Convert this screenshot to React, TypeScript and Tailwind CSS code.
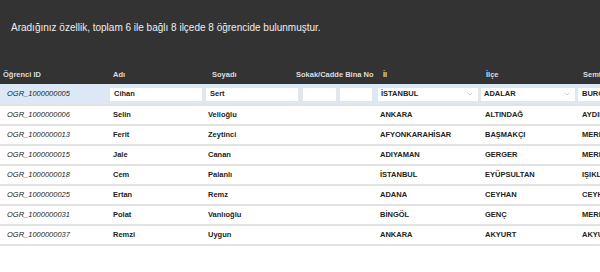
import React from 'react';
import { ChevronDown } from 'lucide-react';

const students = [
  { id: 'OGR_1000000005', ad: 'Cihan', soyad: 'Sert', il: 'İSTANBUL', ilce: 'ADALAR', semt: 'BURGAZADA' },
  { id: 'OGR_1000000006', ad: 'Selin', soyad: 'Velioğlu', il: 'ANKARA', ilce: 'ALTINDAĞ', semt: 'AYDINLIKEVLER' },
  { id: 'OGR_1000000013', ad: 'Ferit', soyad: 'Zeytinci', il: 'AFYONKARAHİSAR', ilce: 'BAŞMAKÇI', semt: 'MERKEZ' },
  { id: 'OGR_1000000015', ad: 'Jale', soyad: 'Canan', il: 'ADIYAMAN', ilce: 'GERGER', semt: 'MERKEZ' },
  { id: 'OGR_1000000018', ad: 'Cem', soyad: 'Palanlı', il: 'İSTANBUL', ilce: 'EYÜPSULTAN', semt: 'IŞIKLAR' },
  { id: 'OGR_1000000025', ad: 'Ertan', soyad: 'Remz', il: 'ADANA', ilce: 'CEYHAN', semt: 'CEYHAN' },
  { id: 'OGR_1000000031', ad: 'Polat', soyad: 'Vanlıoğlu', il: 'BİNGÖL', ilce: 'GENÇ', semt: 'MERKEZ' },
  { id: 'OGR_1000000037', ad: 'Remzi', soyad: 'Uygun', il: 'ANKARA', ilce: 'AKYURT', semt: 'AKYURT' },
];

const cols = 'grid grid-cols-[108px_95px_98px_37px_37px_105px_97px_100px]';

const TextBox = ({ value, className = '' }: { value?: string; className?: string }) => (
  <div className={`h-[15px] bg-white border border-[#e6e6e6] flex items-center pl-[4px] overflow-hidden whitespace-nowrap ${className}`}>
    {value}
  </div>
);

const SelectBox = ({ value, className = '' }: { value: string; className?: string }) => (
  <div className={`h-[15px] bg-white border border-[#e6e6e6] flex items-center justify-between pl-[3px] pr-[4px] ${className}`}>
    <span>{value}</span>
    <ChevronDown size={8} className="text-[#999]" strokeWidth={1.5} />
  </div>
);

const App = () => {
  return (
    <div className="w-[600px] h-[272px] bg-white overflow-hidden font-['Liberation_Sans',Arial,sans-serif]">
      <div className="bg-[#333333]">
        <div className="h-[66px] pl-[11px] pt-[20px] text-[10px] text-[#eeeeee]">
          Aradığınız özellik, toplam 6 ile bağlı 8 ilçede 8 öğrencide bulunmuştur.
        </div>
        <div className={`${cols} h-[18px] items-center text-[7.5px] font-bold text-[#dddddd]`}>
          <div className="pl-[3px]">Öğrenci ID</div>
          <div className="pl-[5px]">Adı</div>
          <div className="pl-[9px]">Soyadı</div>
          <div className="col-span-2 -ml-[5px] whitespace-nowrap">Sokak/Cadde Bina No</div>
          <div className="pl-[8px]">İl</div>
          <div className="pl-[6px]">İlçe</div>
          <div className="pl-[6px]">Semt</div>
        </div>
      </div>

      {students.map((s, i) =>
        i === 0 ? (
          <div
            key={s.id}
            className={`${cols} h-[22px] items-center bg-[#dde8f6] border-b-2 border-[#e2e2e2] text-[7.5px] font-bold text-[#222]`}
          >
            <div className="pl-[7px] italic font-normal">{s.id}</div>
            <TextBox value={s.ad} className="ml-[1px]" />
            <TextBox value={s.soyad} className="ml-[2px] mr-[2px]" />
            <TextBox className="ml-[1px] mr-[1px]" />
            <TextBox className="ml-[1px] mr-[2px]" />
            <SelectBox value={s.il} className="ml-[2px] mr-[1px]" />
            <SelectBox value={s.ilce} className="mr-[1px]" />
            <TextBox value={s.semt} />
          </div>
        ) : (
          <div
            key={s.id}
            className={`${cols} h-[20px] items-center border-b-2 border-[#e2e2e2] text-[7.5px] font-bold text-[#222] whitespace-nowrap`}
          >
            <div className="pl-[7px] italic font-normal">{s.id}</div>
            <div className="pl-[5px]">{s.ad}</div>
            <div className="pl-[5px]">{s.soyad}</div>
            <div />
            <div />
            <div className="pl-[5px]">{s.il}</div>
            <div className="pl-[5px]">{s.ilce}</div>
            <div className="pl-[5px]">{s.semt}</div>
          </div>
        )
      )}
    </div>
  );
};

export default App;
